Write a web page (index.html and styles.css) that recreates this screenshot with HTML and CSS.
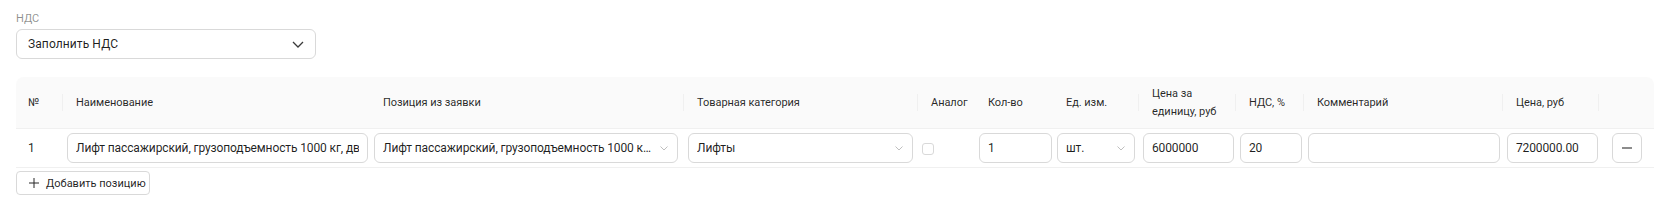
FILE: index.html
```html
<!DOCTYPE html>
<html lang="ru">
<head>
<meta charset="utf-8">
<title>НДС</title>
<link rel="stylesheet" href="styles.css">
</head>
<body>
<div class="page">
  <div class="field">
    <div class="field-label">НДС</div>
    <div class="select select-main">
      <span class="select-value">Заполнить НДС</span>
      <svg class="chev-main" width="12" height="7" viewBox="0 0 12 7"><path d="M1 1l5 5 5-5" fill="none" stroke="#3a3a3a" stroke-width="1.3"/></svg>
    </div>
  </div>

  <div class="table">
    <div class="row head">
      <div class="th sep">№</div>
      <div class="th">Наименование</div>
      <div class="th sep">Позиция из заявки</div>
      <div class="th sep">Товарная категория</div>
      <div class="th">Аналог</div>
      <div class="th">Кол-во</div>
      <div class="th sep">Ед. изм.</div>
      <div class="th sep">Цена за<br>единицу, руб</div>
      <div class="th sep">НДС, %</div>
      <div class="th sep">Комментарий</div>
      <div class="th sep">Цена, руб</div>
      <div class="th"></div>
    </div>
    <div class="row body">
      <div class="td td-num">1</div>
      <div class="td"><div class="input w-name"><span class="clip">Лифт пассажирский, грузоподъемность 1000 кг, двери автоматические</span></div></div>
      <div class="td"><div class="input select-sm w-pos"><span class="ellipsis">Лифт пассажирский, грузоподъемность 1000 кг, двери автоматические</span><svg class="chev-sm" width="8" height="5" viewBox="0 0 8 5"><path d="M0.5 0.5l3.5 3.5 3.5-3.5" fill="none" stroke="#bfbfbf" stroke-width="1"/></svg></div></div>
      <div class="td"><div class="input select-sm w-cat"><span class="ellipsis">Лифты</span><svg class="chev-sm" width="8" height="5" viewBox="0 0 8 5"><path d="M0.5 0.5l3.5 3.5 3.5-3.5" fill="none" stroke="#bfbfbf" stroke-width="1"/></svg></div></div>
      <div class="td"><span class="checkbox"></span></div>
      <div class="td"><div class="input w-qty">1</div></div>
      <div class="td"><div class="input select-sm w-unit"><span class="ellipsis">шт.</span><svg class="chev-sm" width="8" height="5" viewBox="0 0 8 5"><path d="M0.5 0.5l3.5 3.5 3.5-3.5" fill="none" stroke="#bfbfbf" stroke-width="1"/></svg></div></div>
      <div class="td"><div class="input w-price">6000000</div></div>
      <div class="td"><div class="input w-vat">20</div></div>
      <div class="td"><div class="input w-comment"></div></div>
      <div class="td"><div class="input w-total">7200000.00</div></div>
      <div class="td td-action"><button class="btn-icon" type="button"><span class="minus"></span></button></div>
    </div>
  </div>

  <button class="btn-add" type="button"><svg width="10" height="10" viewBox="0 0 10 10"><path d="M5 0v10M0 5h10" stroke="#262626" stroke-width="1"/></svg><span>Добавить позицию</span></button>
</div>
</body>
</html>
```

FILE: styles.css
```css
* { box-sizing: border-box; }
html, body { margin: 0; padding: 0; background: #fff; }
body {
  font-family: Roboto, "Noto Sans", sans-serif;
  color: rgba(0, 0, 0, 0.88);
  font-size: 12px;
}
.page {
  padding: 11px 5px 0 16px;
}
.field-label {
  font-size: 11px;
  line-height: 16px;
  color: rgba(0, 0, 0, 0.45);
  margin-bottom: 2px;
}
.select {
  display: flex;
  align-items: center;
  justify-content: space-between;
  border: 1px solid #d9d9d9;
  border-radius: 6px;
  background: #fff;
}
.select-main {
  width: 300px;
  height: 30px;
  padding: 0 11px 0 11px;
}
.select-value { letter-spacing: 0.1px; }
.chev-main { display: block; }

.table {
  margin-top: 18px;
  width: 1638px;
}
.row {
  display: grid;
  grid-template-columns: 47px 307px 314px 234px 57px 78px 86px 97px 68px 199px 96px 55px;
  align-items: center;
}
.head {
  height: 52px;
  background: #fafafa;
  border-radius: 8px 8px 0 0;
  border-bottom: 1px solid #f0f0f0;
  font-size: 11px;
  line-height: 18px;
  letter-spacing: -0.05px;
  color: rgba(0, 0, 0, 0.85);
}
.th {
  position: relative;
  padding-left: 13px;
  white-space: nowrap;
}
.th:first-child { padding-left: 12px; }
.th.sep::after {
  content: "";
  position: absolute;
  right: 0;
  top: 50%;
  width: 1px;
  height: 17px;
  margin-top: -9px;
  background: #f0f0f0;
}
.body {
  height: 39px;
  border-bottom: 1px solid #f0f0f0;
}
.td {
  padding-left: 4px;
  display: flex;
  align-items: center;
  min-width: 0;
}
.td-num { padding-left: 12px; }
.td-action { padding-left: 13px; }
.input {
  height: 30px;
  border: 1px solid #d9d9d9;
  border-radius: 6px;
  padding: 0 8px;
  display: flex;
  align-items: center;
  white-space: nowrap;
  overflow: hidden;
  background: #fff;
  letter-spacing: -0.12px;
}
.clip { overflow: hidden; white-space: nowrap; }
.ellipsis {
  overflow: hidden;
  text-overflow: ellipsis;
  white-space: nowrap;
  flex: 1;
  min-width: 0;
}
.select-sm { justify-content: space-between; padding-right: 9px; }
.chev-sm { flex: none; margin-left: 5px; display: block; }
.w-name { width: 301px; }
.w-pos { width: 304px; }
.w-cat { width: 225px; }
.w-qty { width: 73px; }
.w-unit { width: 78px; }
.w-price { width: 91px; }
.w-vat { width: 62px; }
.w-comment { width: 192px; }
.w-total { width: 91px; }
.checkbox {
  width: 12px;
  height: 12px;
  border: 1px solid #d9d9d9;
  border-radius: 3px;
  background: #fff;
  margin-top: 2px;
}
.btn-icon {
  width: 30px;
  height: 30px;
  border: 1px solid #d9d9d9;
  border-radius: 6px;
  background: #fff;
  padding: 0;
  display: flex;
  align-items: center;
  justify-content: center;
}
.minus {
  width: 10px;
  height: 2px;
  background: #8c8c8c;
}
.btn-add {
  margin-top: 3px;
  height: 24px;
  width: 134px;
  border: 1px solid #d9d9d9;
  border-radius: 4px;
  background: #fff;
  display: flex;
  align-items: center;
  gap: 7px;
  padding: 0 11px 0 12px;
  font-family: inherit;
  font-size: 11px;
  white-space: nowrap;
  color: rgba(0, 0, 0, 0.88);
}
.btn-add svg { display: block; flex: none; }
```
